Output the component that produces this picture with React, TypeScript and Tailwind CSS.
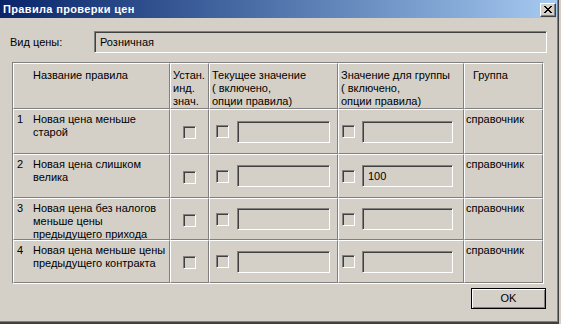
import { Fragment } from "react";

const rows = [
  { n: "1", name: ["Новая цена меньше", "старой"], group: "" },
  { n: "2", name: ["Новая цена слишком", "велика"], group: "100" },
  { n: "3", name: ["Новая цена без налогов", "меньше цены", "предыдущего прихода"], group: "" },
  { n: "4", name: ["Новая цена меньше цены", "предыдущего контракта"], group: "" },
];

const rowHeights = ["h-[45px]", "h-[44px]", "h-[42px]", "h-[43px]"];

function Check() {
  return (
    <div className="h-[13px] w-[13px] shrink-0 border-t border-l border-t-[#808080] border-l-[#808080] border-b border-r border-b-white border-r-white shadow-[inset_1px_1px_#404040]" />
  );
}

function Field({ width, value }: { width: string; value?: string }) {
  return (
    <div
      className={`${width} flex h-[22px] shrink-0 items-center border-t border-l border-t-[#808080] border-l-[#808080] border-b border-r border-b-white border-r-white pl-[5px] shadow-[inset_1px_1px_#404040]`}
    >
      {value}
    </div>
  );
}

function CloseGlyph() {
  const px = [
    [0, 0], [1, 0], [6, 0], [7, 0],
    [1, 1], [2, 1], [5, 1], [6, 1],
    [2, 2], [3, 2], [4, 2], [5, 2],
    [3, 3], [4, 3],
    [2, 4], [3, 4], [4, 4], [5, 4],
    [1, 5], [2, 5], [5, 5], [6, 5],
    [0, 6], [1, 6], [6, 6], [7, 6],
  ];
  return (
    <svg width="8" height="7" viewBox="0 0 8 7" shapeRendering="crispEdges">
      {px.map(([x, y], i) => (
        <rect key={i} x={x} y={y} width="1" height="1" fill="#000" />
      ))}
    </svg>
  );
}

const cell = "border-t border-l border-t-white border-l-white border-b border-r border-b-[#808080] border-r-[#808080]";

export default function App() {
  return (
    <div className="h-[324px] w-[561px] bg-[#d4d0c8] font-['Liberation_Sans',Arial,sans-serif] text-[11px] leading-[13px] text-black">
      <div className="h-[324px] w-[559px] border-r border-b-2 border-[#404040]">
        <div className="flex h-full w-full flex-col border-r border-b border-[#808080]">
          <div className="flex h-[18px] items-center justify-between bg-gradient-to-r from-[#0a246a] to-[#a6caf0] pl-[3px] pr-[1px]">
            <span className="text-[11px] font-bold tracking-[0.35px] text-white">Правила проверки цен</span>
            <div className="mt-[1px] flex h-[14px] w-[16px] items-center justify-center border-t border-l border-t-white border-l-white border-b border-r border-b-[#404040] border-r-[#404040] bg-[#d4d0c8] shadow-[inset_-1px_-1px_#808080]">
              <CloseGlyph />
            </div>
          </div>

          <div className="mt-[13px] flex items-center">
            <span className="w-[94px] pl-[10px]">Вид цены:</span>
            <Field width="w-[453px]" value="Розничная" />
          </div>

          <div className="ml-[12px] mt-[9px] grid w-[532px] grid-cols-[157px_39px_129px_126px_79px] border-t border-l border-t-[#808080] border-l-[#808080] border-b border-r border-b-white border-r-white">
            <div className={`${cell} h-[46px] pl-[19px] pt-[5px]`}>Название правила</div>
            <div className={`${cell} pl-[2px] pt-[5px]`}>
              Устан.
              <br />
              инд.
              <br />
              знач.
            </div>
            <div className={`${cell} pl-[2px] pt-[5px]`}>
              Текущее значение
              <br />( включено,
              <br />
              опции правила)
            </div>
            <div className={`${cell} pl-[2px] pt-[5px]`}>
              Значение для группы
              <br />( включено,
              <br />
              опции правила)
            </div>
            <div className={`${cell} pl-[8px] pt-[5px]`}>Группа</div>

            {rows.map((r, i) => (
              <Fragment key={r.n}>
                <div className={`${cell} ${rowHeights[i]} flex pl-[3px] pt-[3px]`}>
                  <span className="w-[16px] shrink-0">{r.n}</span>
                  <div>
                    {r.name.map((l) => (
                      <div key={l}>{l}</div>
                    ))}
                  </div>
                </div>
                <div className={`${cell} flex items-center justify-center pt-[2px]`}>
                  <Check />
                </div>
                <div className={`${cell} flex items-center gap-[8px] pl-[6px]`}>
                  <Check />
                  <Field width="w-[93px]" />
                </div>
                <div className={`${cell} flex items-center gap-[7px] pl-[3px]`}>
                  <Check />
                  <Field width="w-[91px]" value={r.group} />
                </div>
                <div className={`${cell} pl-[1px] pt-[3px]`}>справочник</div>
              </Fragment>
            ))}
          </div>

          <div className="mt-[4px] flex justify-end pr-[11px]">
            <div className="flex h-[21px] w-[75px] items-center justify-center border border-black shadow-[inset_1px_1px_#fff,inset_-1px_-1px_#808080]">
              OK
            </div>
          </div>
        </div>
      </div>
    </div>
  );
}
